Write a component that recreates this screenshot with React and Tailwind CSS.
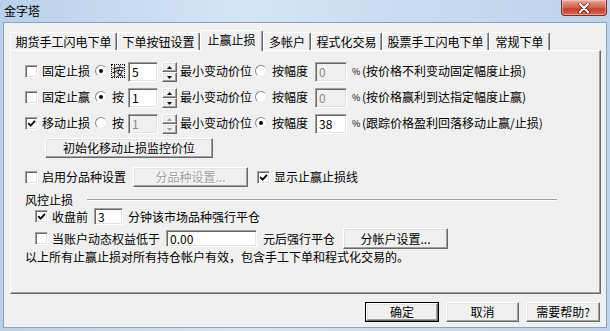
import React from "react";

const raised =
  "border border-t-white border-l-white border-r-[#696969] border-b-[#696969] shadow-[inset_-1px_-1px_0_#a0a0a0,inset_1px_1px_0_#e3e3e3]";
const sunken =
  "border border-t-[#a0a0a0] border-l-[#a0a0a0] border-r-white border-b-white shadow-[inset_1px_1px_0_#696969,inset_-1px_-1px_0_#e3e3e3]";

function Check({ checked, className = "" }) {
  return (
    <span
      className={`flex h-[13px] w-[13px] shrink-0 items-center justify-center bg-white ${sunken} ${className}`}
    >
      {checked && (
        <svg width="9" height="9" viewBox="0 0 9 9">
          <path d="M1.2 4.2 L3.6 6.6 L8 1.8" stroke="#000" strokeWidth="1.8" fill="none" />
        </svg>
      )}
    </span>
  );
}

function Radio({ checked, className = "" }) {
  return (
    <span
      className={`flex h-[12px] w-[12px] shrink-0 items-center justify-center rounded-full border border-t-[#8a8a8a] border-l-[#8a8a8a] border-r-[#e8e8e8] border-b-[#e8e8e8] bg-white ${className}`}
    >
      {checked && <span className="h-[4px] w-[4px] rounded-full bg-black" />}
    </span>
  );
}

function Field({ value, disabled, className = "" }) {
  return (
    <span
      className={`flex shrink-0 items-center pl-[3px] text-[12px] ${sunken} ${
        disabled ? "bg-[#f0f0f0] text-[#8a8a8a]" : "bg-white text-black"
      } ${className}`}
    >
      {value}
    </span>
  );
}

function Spin({ disabled }) {
  const c = disabled ? "#a0a0a0" : "#000";
  return (
    <span className="ml-[4px] flex h-[20px] w-[15px] shrink-0 flex-col">
      <span className={`flex h-[10px] items-center justify-center bg-[#f0f0f0] ${raised}`}>
        <svg width="5" height="3" viewBox="0 0 5 3">
          <path d="M2.5 0 L5 3 L0 3Z" fill={c} />
        </svg>
      </span>
      <span className={`flex h-[10px] items-center justify-center bg-[#f0f0f0] ${raised}`}>
        <svg width="5" height="3" viewBox="0 0 5 3">
          <path d="M0 0 L5 0 L2.5 3Z" fill={c} />
        </svg>
      </span>
    </span>
  );
}

function Btn({ children, className = "", disabled, isDefault }) {
  const inner = (
    <span
      className={`flex h-full w-full items-center justify-center bg-[#f0f0f0] ${raised} ${
        disabled ? "text-[#a0a0a0] [text-shadow:1px_1px_0_#fff]" : "text-black"
      }`}
    >
      {children}
    </span>
  );
  if (isDefault) {
    return <span className={`flex shrink-0 border border-black ${className}`}>{inner}</span>;
  }
  return <span className={`flex shrink-0 ${className}`}>{inner}</span>;
}

function StopRow({ checked, label, first, pick, value, disabledStep, pct, note }) {
  return (
    <div className="flex h-[20px] items-start pl-[14px]">
      <Check checked={checked} className="mt-[3px]" />
      <span className="ml-[4px] mt-[3px] w-[48px] shrink-0">{label}</span>
      <Radio checked={pick === "step"} className="ml-[5px] mt-[3px]" />
      <span
        className={`ml-[5px] mt-[3px] w-[12px] shrink-0 ${
          first ? "outline outline-1 outline-dotted outline-black" : ""
        }`}
      >
        按
      </span>
      <Field value={value} disabled={disabledStep} className="ml-[4px] h-[20px] w-[30px]" />
      <Spin disabled={disabledStep} />
      <span className="ml-[3px] mt-[3px] w-[72px] shrink-0">最小变动价位</span>
      <Radio checked={pick === "pct"} className="ml-[3px] mt-[3px]" />
      <span className="ml-[5px] mt-[3px] w-[36px] shrink-0">按幅度</span>
      <Field value={pct} disabled={pick !== "pct"} className="ml-[7px] h-[20px] w-[32px]" />
      <span className="ml-[5px] mt-[5px] w-[9px] shrink-0 text-[9px]">%</span>
      <span className="ml-[1px] mt-[3px] whitespace-nowrap">{note}</span>
    </div>
  );
}

export default function App() {
  const tabs = [
    { label: "期货手工闪电下单", w: "w-[107px]" },
    { label: "下单按钮设置", w: "w-[83px]" },
    { label: "止赢止损", w: "w-[63px]", active: true },
    { label: "多帐户", w: "w-[48px]" },
    { label: "程式化交易", w: "w-[71px]" },
    { label: "股票手工闪电下单", w: "w-[107px]" },
    { label: "常规下单", w: "w-[61px]" },
  ];

  return (
    <div className="flex h-[331px] w-[610px] flex-col overflow-hidden bg-[linear-gradient(to_right,#b9d0ea,#d5e5f6_40%,#cadcf0_65%,#bcd3ec)] font-['Noto_Sans_CJK_SC',sans-serif] text-[12px] leading-none text-black">
      {/* Title bar */}
      <div className="flex h-[22px] shrink-0 items-start justify-between">
        <span className="ml-[4px] mt-[5px]">金字塔</span>
        <span className="mr-[3px] flex h-[16px] w-[46px] items-center justify-center rounded-b-[4px] border border-t-0 border-[#7a3329] bg-[linear-gradient(to_bottom,#e9a99a,#d3604c_50%,#c2412e_60%,#d66a50)] shadow-[inset_0_0_0_1px_rgba(255,255,255,0.35)]">
          <svg width="12" height="10" viewBox="0 0 12 10">
            <path d="M2 1 L10 9 M10 1 L2 9" stroke="#5a1a12" strokeWidth="3.4" strokeLinecap="round" />
            <path d="M2 1 L10 9 M10 1 L2 9" stroke="#fff" strokeWidth="2" strokeLinecap="round" />
          </svg>
        </span>
      </div>

      {/* Client area */}
      <div className="mx-[3px] mb-[3px] flex flex-1 flex-col border border-[#8ea3bb] bg-[#f0f0f0]">
        {/* Tabs */}
        <div className="ml-[6px] mt-[7px] flex h-[20px] items-end">
          {tabs.map((tab) =>
            tab.active ? (
              <span
                key={tab.label}
                className={`relative z-10 -mb-[1px] flex h-[21px] shrink-0 items-start justify-center rounded-t-[2px] border-l border-t border-r border-l-white border-t-white border-r-[#696969] bg-[#f0f0f0] pt-[3px] shadow-[inset_-1px_0_0_#a0a0a0] ${tab.w}`}
              >
                {tab.label}
              </span>
            ) : (
              <span
                key={tab.label}
                className={`flex h-[18px] shrink-0 items-center justify-center rounded-t-[2px] border-l border-t border-r border-l-white border-t-white border-r-[#696969] bg-[#f0f0f0] pt-[1px] shadow-[inset_-1px_0_0_#a0a0a0] ${tab.w}`}
              >
                {tab.label}
              </span>
            )
          )}
        </div>

        {/* Panel */}
        <div className="ml-[6px] flex h-[244px] w-[591px] flex-col border border-t-white border-l-white border-r-[#696969] border-b-[#696969] shadow-[inset_-1px_-1px_0_#a0a0a0]">
          <div className="mt-[11px]">
            <StopRow
              first
              label="固定止损"
              pick="step"
              value="5"
              pct="0"
              note="(按价格不利变动固定幅度止损)"
            />
          </div>
          <div className="mt-[6px]">
            <StopRow
              label="固定止赢"
              pick="step"
              value="1"
              pct="0"
              note="(按价格赢利到达指定幅度止赢)"
            />
          </div>
          <div className="mt-[6px]">
            <StopRow
              checked
              label="移动止损"
              pick="pct"
              value="1"
              disabledStep
              pct="38"
              note="(跟踪价格盈利回落移动止赢/止损)"
            />
          </div>

          <div className="mt-[4px] flex pl-[34px]">
            <Btn className="h-[20px] w-[168px]">初始化移动止损监控价位</Btn>
          </div>

          <div className="mt-[9px] flex h-[20px] items-center pl-[14px]">
            <Check />
            <span className="ml-[4px] w-[84px] shrink-0">启用分品种设置</span>
            <Btn disabled className="ml-[7px] h-[20px] w-[115px]">
              分品种设置...
            </Btn>
            <Check checked className="ml-[9px]" />
            <span className="ml-[4px] whitespace-nowrap">显示止赢止损线</span>
          </div>

          {/* 风控止损 group */}
          <div className="mt-[7px] flex h-[13px] items-start pl-[14px]">
            <span className="w-[48px] shrink-0">风控止损</span>
            <span className="ml-[14px] mt-[5px] h-[2px] w-[470px] border-t border-b border-t-[#a0a0a0] border-b-white" />
          </div>

          <div className="mt-[1px] flex h-[17px] items-center pl-[24px]">
            <Check checked />
            <span className="ml-[4px] w-[36px] shrink-0">收盘前</span>
            <Field value="3" className="ml-[6px] h-[17px] w-[29px]" />
            <span className="ml-[5px] whitespace-nowrap">分钟该市场品种强行平仓</span>
          </div>

          <div className="mt-[3px] flex h-[21px] items-center pl-[24px]">
            <Check />
            <span className="ml-[4px] w-[108px] shrink-0">当账户动态权益低于</span>
            <Field value="0.00" className="ml-[6px] h-[17px] w-[91px]" />
            <span className="ml-[6px] w-[72px] shrink-0">元后强行平仓</span>
            <Btn className="ml-[8px] h-[21px] w-[105px]">分帐户设置...</Btn>
          </div>

          <div className="mt-[1px] flex h-[13px] items-center pl-[14px]">
            <span className="whitespace-nowrap">
              以上所有止赢止损对所有持仓帐户有效，包含手工下单和程式化交易的。
            </span>
          </div>
        </div>

        {/* Dialog buttons */}
        <div className="mt-[8px] flex h-[20px] justify-end gap-[7px] pr-[6px]">
          <Btn isDefault className="h-[20px] w-[74px]">
            确定
          </Btn>
          <Btn className="h-[20px] w-[73px]">取消</Btn>
          <Btn className="h-[20px] w-[74px]">需要帮助?</Btn>
        </div>
      </div>
    </div>
  );
}
